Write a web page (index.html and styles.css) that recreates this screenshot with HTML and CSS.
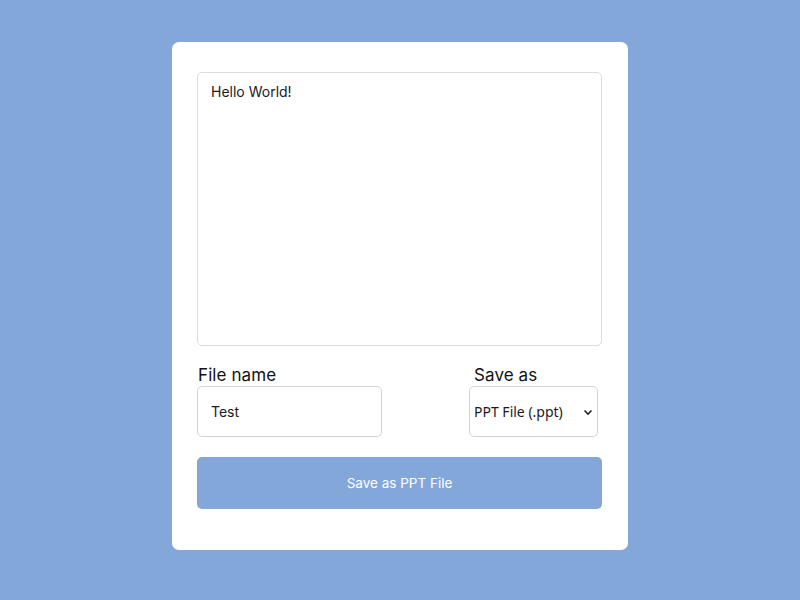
FILE: index.html
```html
<!DOCTYPE html>
<html>
<head>
<meta charset="utf-8">
<link rel="stylesheet" href="styles.css">
</head>
<body>
<div class="card">
  <textarea class="editor">Hello World!</textarea>
  <div class="options">
    <div class="field name-field">
      <label class="label">File name</label>
      <input class="name-input" type="text" value="Test">
    </div>
    <div class="field type-field">
      <label class="label">Save as</label>
      <div class="select-box">
        <span class="select-text">PPT File (.ppt)</span>
        <svg class="chev" width="10" height="7" viewBox="0 0 10 7"><path d="M1.5 1.5 L5 5 L8.5 1.5" fill="none" stroke="#222" stroke-width="1.6"/></svg>
      </div>
    </div>
  </div>
  <button class="save-btn">Save as PPT File</button>
</div>
</body>
</html>
```
FILE: styles.css
```css
* { box-sizing: border-box; }
html, body { height: 100%; }
body {
  margin: 0;
  background: #83a7d9;
  font-family: "Inter", "Noto Sans", sans-serif;
  display: flex;
  justify-content: center;
  padding-top: 42px;
}
.card {
  width: 456px;
  height: 508px;
  background: #fff;
  border-radius: 7px;
  padding: 30px 26px 41px 25px;
  display: flex;
  flex-direction: column;
}
.editor {
  width: 405px;
  height: 274px;
  border: 1px solid #dcdcdc;
  border-radius: 5px;
  padding: 10px 13px;
  font-family: inherit;
  font-size: 14px;
  color: #1a1a1a;
  resize: none;
  outline: none;
  display: block;
}
.options {
  display: flex;
  justify-content: space-between;
  margin-top: 19px;
  width: 405px;
}
.field { display: flex; flex-direction: column; }
.label {
  font-size: 17px;
  color: #111;
  line-height: 20px;
  margin-bottom: 1px;
  padding-left: 1px;
  letter-spacing: 0.1px;
}
.type-field .label { padding-left: 5px; }
.name-input {
  width: 185px;
  height: 51px;
  border: 1px solid #d4d4d4;
  border-radius: 5px;
  padding: 0 13px;
  font-family: inherit;
  font-size: 14px;
  color: #1a1a1a;
  outline: none;
}
.type-field { margin-right: 4px; }
.select-box {
  width: 129px;
  height: 51px;
  border: 1px solid #d4d4d4;
  border-radius: 5px;
  display: flex;
  align-items: center;
  justify-content: space-between;
  padding: 0 4px 0 4px;
}
.select-text {
  font-family: "Noto Sans", sans-serif;
  font-size: 14px;
  color: #1a1a1a;
}
.chev { margin-top: 1px; }
.save-btn {
  margin-top: 20px;
  width: 405px;
  height: 52px;
  border: none;
  border-radius: 5px;
  background: #83a7d9;
  color: #fff;
  font-family: inherit;
  font-size: 13.5px;
}
```
